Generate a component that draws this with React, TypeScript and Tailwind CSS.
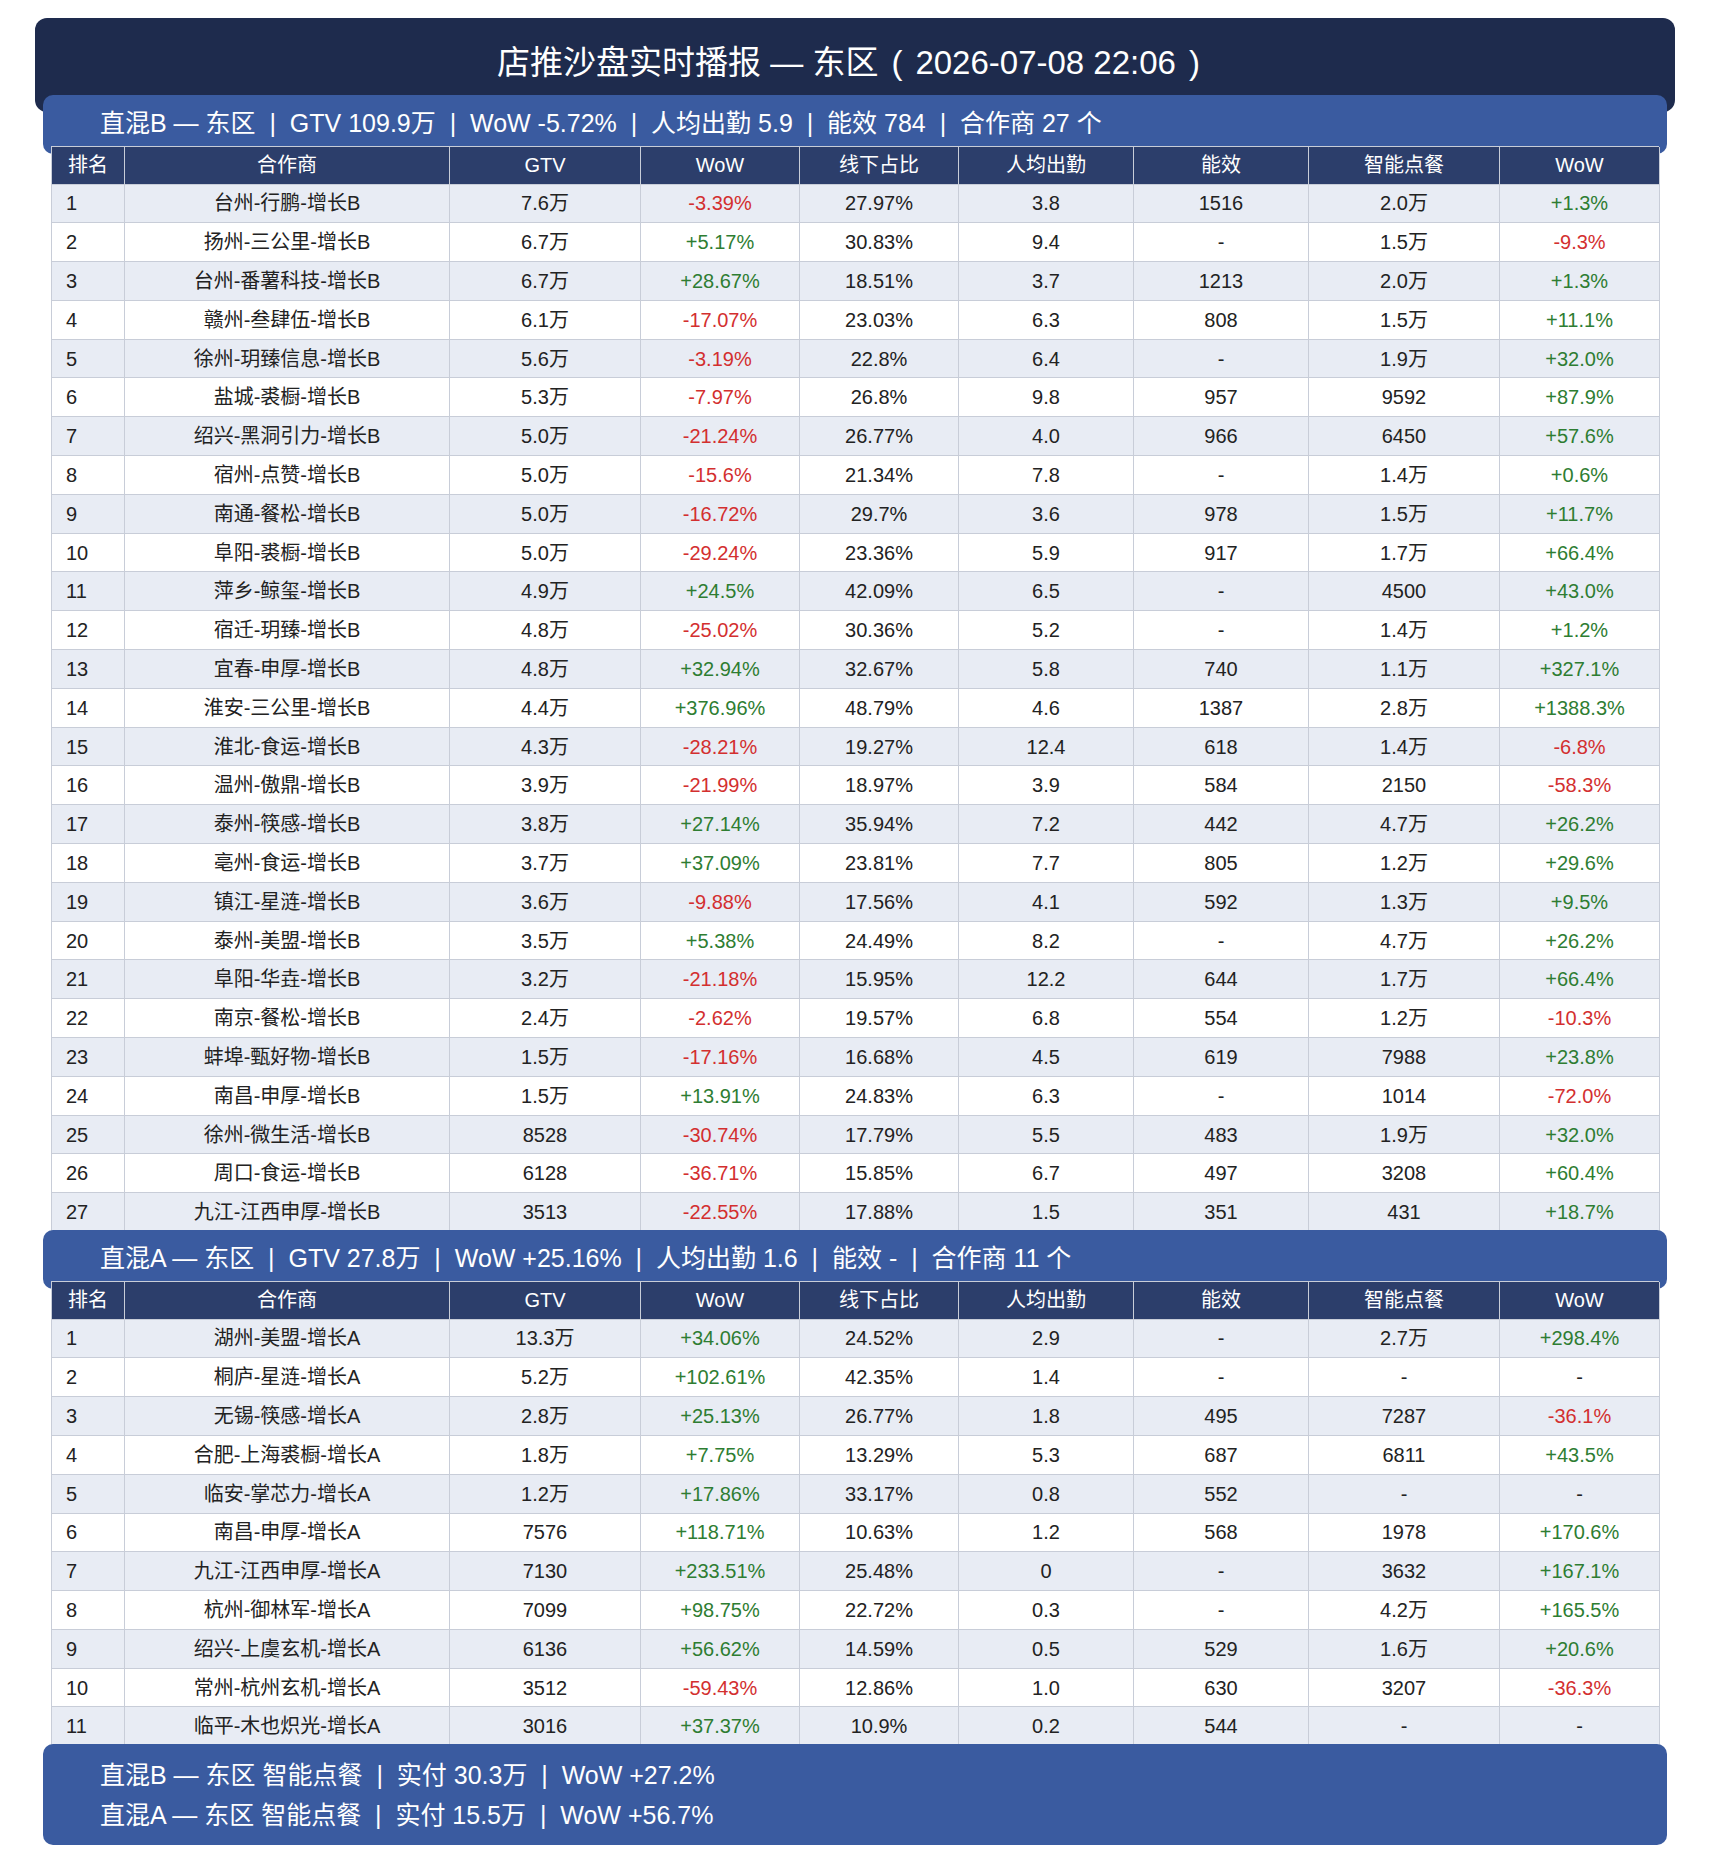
import React from "react";

type Row = [string, string, string, string, string, string, string, string, string];

const secB: Row[] = [
  ["1", "台州-行鹏-增长B", "7.6万", "-3.39%", "27.97%", "3.8", "1516", "2.0万", "+1.3%"],
  ["2", "扬州-三公里-增长B", "6.7万", "+5.17%", "30.83%", "9.4", "-", "1.5万", "-9.3%"],
  ["3", "台州-番薯科技-增长B", "6.7万", "+28.67%", "18.51%", "3.7", "1213", "2.0万", "+1.3%"],
  ["4", "赣州-叁肆伍-增长B", "6.1万", "-17.07%", "23.03%", "6.3", "808", "1.5万", "+11.1%"],
  ["5", "徐州-玥臻信息-增长B", "5.6万", "-3.19%", "22.8%", "6.4", "-", "1.9万", "+32.0%"],
  ["6", "盐城-裘橱-增长B", "5.3万", "-7.97%", "26.8%", "9.8", "957", "9592", "+87.9%"],
  ["7", "绍兴-黑洞引力-增长B", "5.0万", "-21.24%", "26.77%", "4.0", "966", "6450", "+57.6%"],
  ["8", "宿州-点赞-增长B", "5.0万", "-15.6%", "21.34%", "7.8", "-", "1.4万", "+0.6%"],
  ["9", "南通-餐松-增长B", "5.0万", "-16.72%", "29.7%", "3.6", "978", "1.5万", "+11.7%"],
  ["10", "阜阳-裘橱-增长B", "5.0万", "-29.24%", "23.36%", "5.9", "917", "1.7万", "+66.4%"],
  ["11", "萍乡-鲸玺-增长B", "4.9万", "+24.5%", "42.09%", "6.5", "-", "4500", "+43.0%"],
  ["12", "宿迁-玥臻-增长B", "4.8万", "-25.02%", "30.36%", "5.2", "-", "1.4万", "+1.2%"],
  ["13", "宜春-申厚-增长B", "4.8万", "+32.94%", "32.67%", "5.8", "740", "1.1万", "+327.1%"],
  ["14", "淮安-三公里-增长B", "4.4万", "+376.96%", "48.79%", "4.6", "1387", "2.8万", "+1388.3%"],
  ["15", "淮北-食运-增长B", "4.3万", "-28.21%", "19.27%", "12.4", "618", "1.4万", "-6.8%"],
  ["16", "温州-傲鼎-增长B", "3.9万", "-21.99%", "18.97%", "3.9", "584", "2150", "-58.3%"],
  ["17", "泰州-筷感-增长B", "3.8万", "+27.14%", "35.94%", "7.2", "442", "4.7万", "+26.2%"],
  ["18", "亳州-食运-增长B", "3.7万", "+37.09%", "23.81%", "7.7", "805", "1.2万", "+29.6%"],
  ["19", "镇江-星涟-增长B", "3.6万", "-9.88%", "17.56%", "4.1", "592", "1.3万", "+9.5%"],
  ["20", "泰州-美盟-增长B", "3.5万", "+5.38%", "24.49%", "8.2", "-", "4.7万", "+26.2%"],
  ["21", "阜阳-华垚-增长B", "3.2万", "-21.18%", "15.95%", "12.2", "644", "1.7万", "+66.4%"],
  ["22", "南京-餐松-增长B", "2.4万", "-2.62%", "19.57%", "6.8", "554", "1.2万", "-10.3%"],
  ["23", "蚌埠-甄好物-增长B", "1.5万", "-17.16%", "16.68%", "4.5", "619", "7988", "+23.8%"],
  ["24", "南昌-申厚-增长B", "1.5万", "+13.91%", "24.83%", "6.3", "-", "1014", "-72.0%"],
  ["25", "徐州-微生活-增长B", "8528", "-30.74%", "17.79%", "5.5", "483", "1.9万", "+32.0%"],
  ["26", "周口-食运-增长B", "6128", "-36.71%", "15.85%", "6.7", "497", "3208", "+60.4%"],
  ["27", "九江-江西申厚-增长B", "3513", "-22.55%", "17.88%", "1.5", "351", "431", "+18.7%"],
];

const secA: Row[] = [
  ["1", "湖州-美盟-增长A", "13.3万", "+34.06%", "24.52%", "2.9", "-", "2.7万", "+298.4%"],
  ["2", "桐庐-星涟-增长A", "5.2万", "+102.61%", "42.35%", "1.4", "-", "-", "-"],
  ["3", "无锡-筷感-增长A", "2.8万", "+25.13%", "26.77%", "1.8", "495", "7287", "-36.1%"],
  ["4", "合肥-上海裘橱-增长A", "1.8万", "+7.75%", "13.29%", "5.3", "687", "6811", "+43.5%"],
  ["5", "临安-掌芯力-增长A", "1.2万", "+17.86%", "33.17%", "0.8", "552", "-", "-"],
  ["6", "南昌-申厚-增长A", "7576", "+118.71%", "10.63%", "1.2", "568", "1978", "+170.6%"],
  ["7", "九江-江西申厚-增长A", "7130", "+233.51%", "25.48%", "0", "-", "3632", "+167.1%"],
  ["8", "杭州-御林军-增长A", "7099", "+98.75%", "22.72%", "0.3", "-", "4.2万", "+165.5%"],
  ["9", "绍兴-上虞玄机-增长A", "6136", "+56.62%", "14.59%", "0.5", "529", "1.6万", "+20.6%"],
  ["10", "常州-杭州玄机-增长A", "3512", "-59.43%", "12.86%", "1.0", "630", "3207", "-36.3%"],
  ["11", "临平-木也炽光-增长A", "3016", "+37.37%", "10.9%", "0.2", "544", "-", "-"],
];

const widths = [
  "w-[73px]",
  "w-[325px]",
  "w-[191px]",
  "w-[159px]",
  "w-[159px]",
  "w-[175px]",
  "w-[175px]",
  "w-[191px]",
  "w-[160px]",
];

const headers = ["排名", "合作商", "GTV", "WoW", "线下占比", "人均出勤", "能效", "智能点餐", "WoW"];

function colorFor(v: string, idx: number) {
  if (idx !== 3 && idx !== 8) return "text-[#222222]";
  if (v.startsWith("+")) return "text-[#2e7d32]";
  if (v.startsWith("-") && v.length > 1) return "text-[#d32f2f]";
  return "text-[#222222]";
}

function Table({ rows }: { rows: Row[] }) {
  return (
    <div className="relative mx-[51px] w-[1608px] border-t border-l border-[#c8cdd8]">
      <div className="flex h-[37.5px] bg-[#2c3e6b]">
        {headers.map((h, i) => (
          <div
            key={i}
            className={`${widths[i]} shrink-0 flex items-center justify-center border-r border-b border-[#c8cdd8] text-white text-[20px] leading-none`}
          >
            {h}
          </div>
        ))}
      </div>
      {rows.map((r, ri) => (
        <div
          key={ri}
          className={`flex h-[38.8px] ${ri % 2 === 0 ? "bg-[#e8ecf4]" : "bg-white"}`}
        >
          {r.map((v, i) => (
            <div
              key={i}
              className={`${widths[i]} shrink-0 flex items-center ${
                i === 0 ? "justify-start pl-[14px]" : "justify-center"
              } border-r border-b border-[#c8cdd8] text-[20px] leading-none ${colorFor(v, i)}`}
            >
              {v}
            </div>
          ))}
        </div>
      ))}
    </div>
  );
}

function SectionHeader({ text, mt }: { text: string; mt: string }) {
  return (
    <div
      className={`relative ${mt} mx-[43px] w-[1624px] h-[59px] rounded-[10px] bg-[#3a5ba0] pl-[57px] pt-[13px] text-white text-[25px] leading-[30px] whitespace-pre`}
    >
      {text}
    </div>
  );
}

export default function App() {
  return (
    <div className="w-[1709px] min-h-[1869px] bg-white pt-[18px] pb-[23px] font-['Liberation_Sans','Noto_Sans_CJK_SC',sans-serif]">
      <div className="relative mx-[35px] w-[1640px] h-[94px] rounded-[12px] bg-[#1e2b4d] pt-[27px] text-center text-white text-[33px] leading-[35px] whitespace-pre">
        店推沙盘实时播报 — 东区
        <span className="inline-block w-[37px] text-center">(</span>
        2026-07-08 22:06
        <span className="inline-block w-[37px] text-center">)</span>
      </div>
      <SectionHeader
        mt="mt-[-17px]"
        text="直混B — 东区  |  GTV 109.9万  |  WoW -5.72%  |  人均出勤 5.9  |  能效 784  |  合作商 27 个"
      />
      <div className="mt-[-8px]">
        <Table rows={secB} />
      </div>
      <SectionHeader
        mt="mt-[-2px]"
        text="直混A — 东区  |  GTV 27.8万  |  WoW +25.16%  |  人均出勤 1.6  |  能效 -  |  合作商 11 个"
      />
      <div className="mt-[-8px]">
        <Table rows={secA} />
      </div>
      <div className="relative mt-[-2.5px] mx-[43px] w-[1624px] h-[101px] rounded-[10px] bg-[#3a5ba0] pl-[57px] pt-[11.5px] text-white text-[25px] leading-[40px] whitespace-pre">
        <div>直混B — 东区 智能点餐  |  实付 30.3万  |  WoW +27.2%</div>
        <div>直混A — 东区 智能点餐  |  实付 15.5万  |  WoW +56.7%</div>
      </div>
    </div>
  );
}
